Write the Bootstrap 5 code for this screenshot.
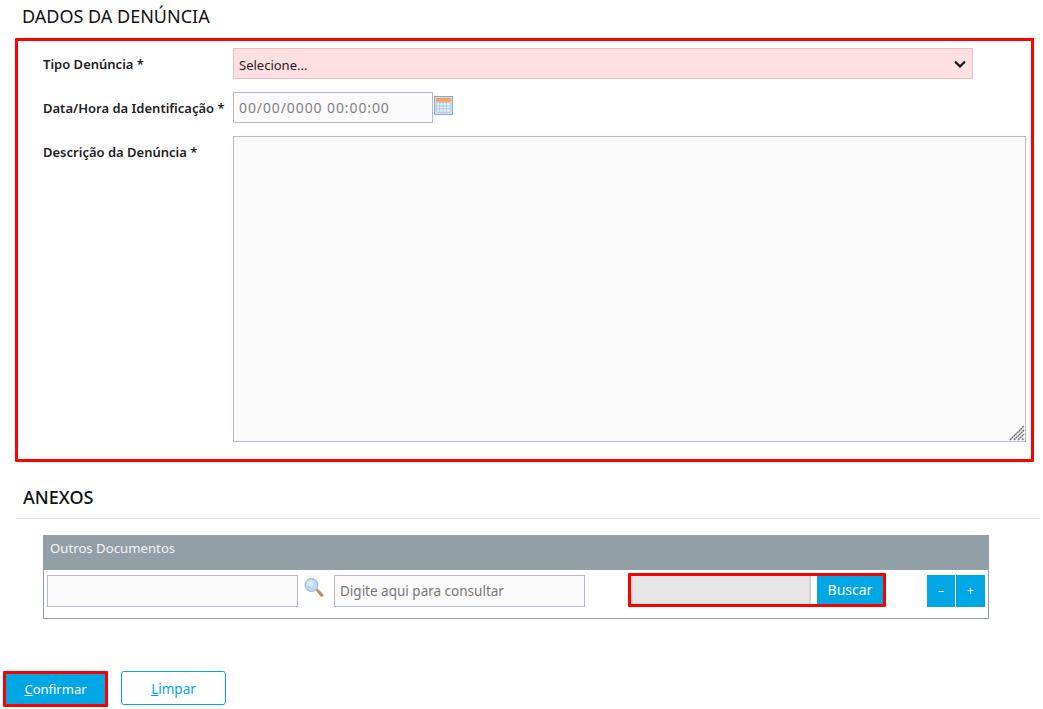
<!DOCTYPE html>
<html lang="pt-BR">
<head>
<meta charset="utf-8">
<title>Dados da Denúncia</title>
<link rel="stylesheet" href="https://cdn.jsdelivr.net/npm/bootstrap@5.3.0/dist/css/bootstrap.min.css">
<style>
html,body{height:709px;overflow:hidden;background:#fff}
body{font-family:"Noto Sans","Open Sans",sans-serif;font-size:13px;color:#111}
.pg{padding:0 3px 0 16px}
.sect-h{font-size:18px;font-weight:400;color:#111;margin:0;border-bottom:1px solid #e5e5e5;line-height:24px}
.sect-a{height:39px;padding:4px 0 0 6px}
.sect-b{height:39px;padding:5px 0 0 7px;font-weight:500;margin-top:18px}
.red-box{border:3px solid #f00;border-radius:1px}
.main-box{margin:-1px 6px 0 -1px;height:424px;padding:7px 5px 17px 25px;row-gap:13px}
.lbl{width:190px;font-size:13px;font-weight:600;color:#222;line-height:18px;padding-top:7px;flex:none}
.fld{height:31px;border:1px solid #b6b8cc;border-radius:0;font-size:13px;padding:0 5px;background-color:#fafafa;color:#333;box-shadow:none}
.fld::placeholder{color:#777;opacity:1}
.sel-bad{width:740px;background-color:#ffdfe1;border-color:#e6bfc5;color:#222;background-image:url("data:image/svg+xml,%3csvg xmlns='http://www.w3.org/2000/svg' viewBox='0 0 12 8'%3e%3cpath fill='none' stroke='%23111' stroke-width='2.200' d='M1 1.500l5 5 5-5'/%3e%3c/svg%3e");background-size:12px 8px;background-position:right 6px center;padding-top:5px}
.date-f{width:200px;font-size:14px;letter-spacing:.9px}
.date-f::placeholder{color:#808080}
.txt-f{height:306px;flex:1;padding:5px;resize:none;background-image:url("data:image/svg+xml,%3csvg xmlns='http://www.w3.org/2000/svg' viewBox='0 0 16 16'%3e%3cpath stroke='%23666' stroke-width='1.400' stroke-dasharray='2 .5' d='M1 15L15 1M5 15L15 5M9 15l6-6M13 15l2-2'/%3e%3c/svg%3e");background-repeat:no-repeat;background-size:16px 16px;background-position:right 0 bottom 0}
.cal{width:19px;height:19px;margin:4px 0 0 1px;flex:none;display:block}
.anx-panel{margin:16px 51px 0 27px;border:1px solid #929fa6;height:84px}
.anx-head{background:#929fa6;color:#f2f5f6;font-size:13.200px;margin:-1px -1px 0;padding:4px 0 0 7px;line-height:18px;height:35px}
.anx-row{padding:5px 3px 0 3px;height:49px}
.f-a{width:251px;height:32px}
.f-b{width:251px;height:32px;font-size:13.500px}
.lupa{width:20px;height:20px;margin:3px 10px 0 6px;flex:none;display:block}
.bus-box{margin:-2px 0 0 43px;width:258px;height:34px;flex:none}
.bus-f{width:180px;height:28px;background:#e6e6e6;border:0;border-left:2px solid #d5d5d5;border-right:2px solid #d5d5d5}
.b-az{background:#00a7e5;color:#fff;border:0;border-radius:0;font-size:14px;padding:0;--bs-btn-hover-bg:#00a7e5;--bs-btn-hover-color:#fff}
.b-bus{width:66px;height:28px;margin-left:6px;padding-bottom:2px}
.b-sm{width:28px;height:32px;font-size:12px}
.b-mns{margin-left:41px;margin-right:1px}
.b-pls{width:29px}
.act-row{margin:52px 0 0 -13px;gap:13px}
.conf-box{width:105px;height:36px}
.b-conf{width:100%;height:100%;font-size:13px;padding-top:2px}
.b-limp{width:105px;height:34px;background:#fff;color:#00a7e5;border:1px solid #00a7e5;border-radius:3px;font-size:13.500px;padding:2px 0 0;--bs-btn-hover-bg:#fff;--bs-btn-hover-color:#00a7e5}
</style>
</head>
<body>
<div class="pg">
  <h2 class="sect-h sect-a">DADOS DA DENÚNCIA</h2>
  <div class="red-box main-box d-flex flex-column">
    <div class="d-flex">
      <label class="lbl">Tipo Denúncia *</label>
      <select class="form-select fld sel-bad"><option>Selecione...</option></select>
    </div>
    <div class="d-flex">
      <label class="lbl">Data/Hora da Identificação *</label>
      <input class="form-control fld date-f" placeholder="00/00/0000 00:00:00">
      <svg class="cal" viewBox="0 0 20 20" aria-hidden="true">
        <rect x=".5" y=".5" width="19" height="19" fill="#cfe2f5" stroke="#7fa6cc"/>
        <rect x="2" y="2" width="16" height="4" fill="#f5a35c"/>
        <rect x="3" y="7" width="14" height="10" fill="#eef5fb" stroke="#9dbbd8" stroke-width=".8"/>
        <path d="M6 7v10M9.500 7v10M13 7v10M3 10.500h14M3 13.500h14" stroke="#9dbbd8" stroke-width=".8"/>
      </svg>
    </div>
    <div class="d-flex">
      <label class="lbl">Descrição da Denúncia *</label>
      <textarea class="form-control fld txt-f"></textarea>
    </div>
  </div>
  <h2 class="sect-h sect-b">ANEXOS</h2>
  <div class="anx-panel">
    <div class="anx-head">Outros Documentos</div>
    <div class="anx-row d-flex align-items-start">
      <input class="form-control fld f-a">
      <svg class="lupa" viewBox="0 0 20 20" aria-hidden="true">
        <path d="M11.500 12l2-1.500 5.500 5.500a1.600 1.600 0 0 1-2.500 2.200z" fill="#c68a4c"/>
        <circle cx="7.500" cy="7" r="6.500" fill="#bcd7f2" stroke="#8fb4dc"/>
        <circle cx="6.500" cy="5.500" r="3" fill="#dcebfa"/>
      </svg>
      <input class="form-control fld f-b" placeholder="Digite aqui para consultar">
      <div class="red-box bus-box d-flex">
        <div class="fld bus-f"></div>
        <button class="btn b-az b-bus" type="button">Buscar</button>
      </div>
      <button class="btn b-az b-sm b-mns" type="button">–</button>
      <button class="btn b-az b-sm b-pls" type="button">+</button>
    </div>
  </div>
  <div class="act-row d-flex align-items-start">
    <div class="red-box conf-box"><button class="btn b-az b-conf" type="button"><u>C</u>onfirmar</button></div>
    <button class="btn b-limp" type="button"><u>L</u>impar</button>
  </div>
</div>
</body>
</html>
